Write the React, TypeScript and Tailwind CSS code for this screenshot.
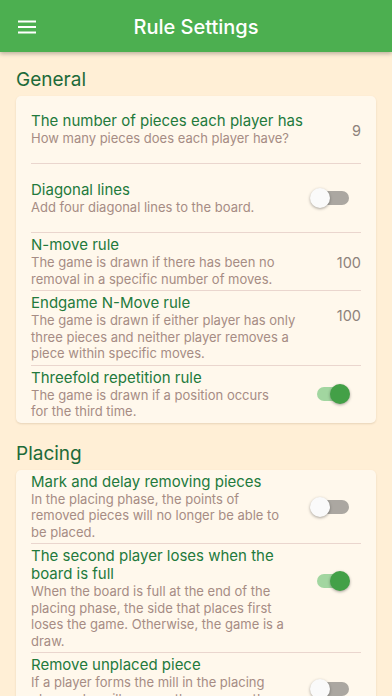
import React from 'react'

type TileProps = {
  title: string
  subtitle: string
  trailing: React.ReactNode
  pad: string
  trailingClass: string
  divider?: boolean
}

function Toggle({ on }: { on: boolean }) {
  return (
    <div className="relative w-[40px] h-[20px]">
      <div
        className={`absolute left-[7px] top-[3px] w-[32px] h-[14px] rounded-full ${on ? 'bg-[#A2D6A0]' : 'bg-[#ABA7A1]'}`}
      />
      <div
        className={`absolute top-0 w-[20px] h-[20px] rounded-full shadow-[0_1px_3px_rgba(0,0,0,0.35)] ${on ? 'left-[20px] bg-[#43A047]' : 'left-0 bg-[#FAFAFA]'}`}
      />
    </div>
  )
}

function Value({ n }: { n: string }) {
  return <span className="text-[14.5px] leading-[18px] text-[#8E827B]">{n}</span>
}

function Tile({ title, subtitle, trailing, pad, trailingClass, divider = true }: TileProps) {
  return (
    <div>
      <div className={`flex ${pad}`}>
        <div className="flex-1 min-w-0">
          <div className="text-[15px] leading-[18px] text-[#237A3C]">{title}</div>
          <div className="text-[13px] leading-[16.5px] text-[#A68C84]">{subtitle}</div>
        </div>
        <div className={`shrink-0 ${trailingClass}`}>{trailing}</div>
      </div>
      {divider && <div className="h-px bg-[#EAD6CE]" />}
    </div>
  )
}

function Section({ label, top, children }: { label: string; top: string; children: React.ReactNode }) {
  return (
    <section className={top}>
      <h2 className="px-4 text-[19px] leading-[24px] text-[#1D6A39] mb-[4px]">{label}</h2>
      <div className="mx-4 rounded-[5px] bg-[#FFF8EC] px-[15px] shadow-[0_1px_2px_rgba(120,90,50,0.18)]">
        {children}
      </div>
    </section>
  )
}

export default function App() {
  return (
    <div className="w-[392px] h-[696px] overflow-hidden bg-[#FFEFD6] font-['Inter',sans-serif]">
      {/* app bar */}
      <header className="relative z-10 h-[52px] pt-[2px] bg-[#4CAF50] flex items-center shadow-[0_2px_4px_rgba(0,0,0,0.25)]">
        <button className="w-[54px] h-full flex items-center justify-center">
          <svg width="18" height="14" viewBox="0 0 18 14">
            <rect x="0" y="0.5" width="18" height="2" fill="white" />
            <rect x="0" y="6" width="18" height="2" fill="white" />
            <rect x="0" y="11.5" width="18" height="2" fill="white" />
          </svg>
        </button>
        <h1 className="absolute left-0 right-0 text-center text-white text-[20px] font-medium pointer-events-none">
          Rule Settings
        </h1>
      </header>

      <Section label="General" top="pt-[16px]">
        <Tile
          title="The number of pieces each player has"
          subtitle="How many pieces does each player have?"
          trailing={<Value n="9" />}
          pad="h-[67px] items-center gap-[16px]"
          trailingClass=""
        />
        <Tile
          title="Diagonal lines"
          subtitle="Add four diagonal lines to the board."
          trailing={<Toggle on={false} />}
          pad="h-[68px] items-center gap-[24px]"
          trailingClass="mr-[11px]"
        />
        <Tile
          title="N-move rule"
          subtitle="The game is drawn if there has been no removal in a specific number of moves."
          trailing={<Value n="100" />}
          pad="py-[3px] items-center gap-[16px]"
          trailingClass=""
        />
        <Tile
          title="Endgame N-Move rule"
          subtitle="The game is drawn if either player has only three pieces and neither player removes a piece within specific moves."
          trailing={<Value n="100" />}
          pad="py-[3px] items-start gap-[16px]"
          trailingClass="mt-[9px]"
        />
        <Tile
          title="Threefold repetition rule"
          subtitle="The game is drawn if a position occurs for the third time."
          trailing={<Toggle on={true} />}
          pad="py-[3px] items-center gap-[24px]"
          trailingClass="mr-[11px]"
          divider={false}
        />
      </Section>

      <Section label="Placing" top="pt-[19px]">
        <Tile
          title="Mark and delay removing pieces"
          subtitle="In the placing phase, the points of removed pieces will no longer be able to be placed."
          trailing={<Toggle on={false} />}
          pad="py-[3px] items-start gap-[24px]"
          trailingClass="mt-[24px] mr-[11px]"
        />
        <Tile
          title="The second player loses when the board is full"
          subtitle="When the board is full at the end of the placing phase, the side that places first loses the game. Otherwise, the game is a draw."
          trailing={<Toggle on={true} />}
          pad="py-[3px] items-start gap-[24px]"
          trailingClass="mt-[24px] mr-[11px]"
        />
        <Tile
          title="Remove unplaced piece"
          subtitle="If a player forms the mill in the placing phase, she will remove the opponent's unplaced piece and continue to make a move."
          trailing={<Toggle on={false} />}
          pad="py-[3px] items-start gap-[24px]"
          trailingClass="mt-[23px] mr-[11px]"
          divider={false}
        />
      </Section>
    </div>
  )
}
